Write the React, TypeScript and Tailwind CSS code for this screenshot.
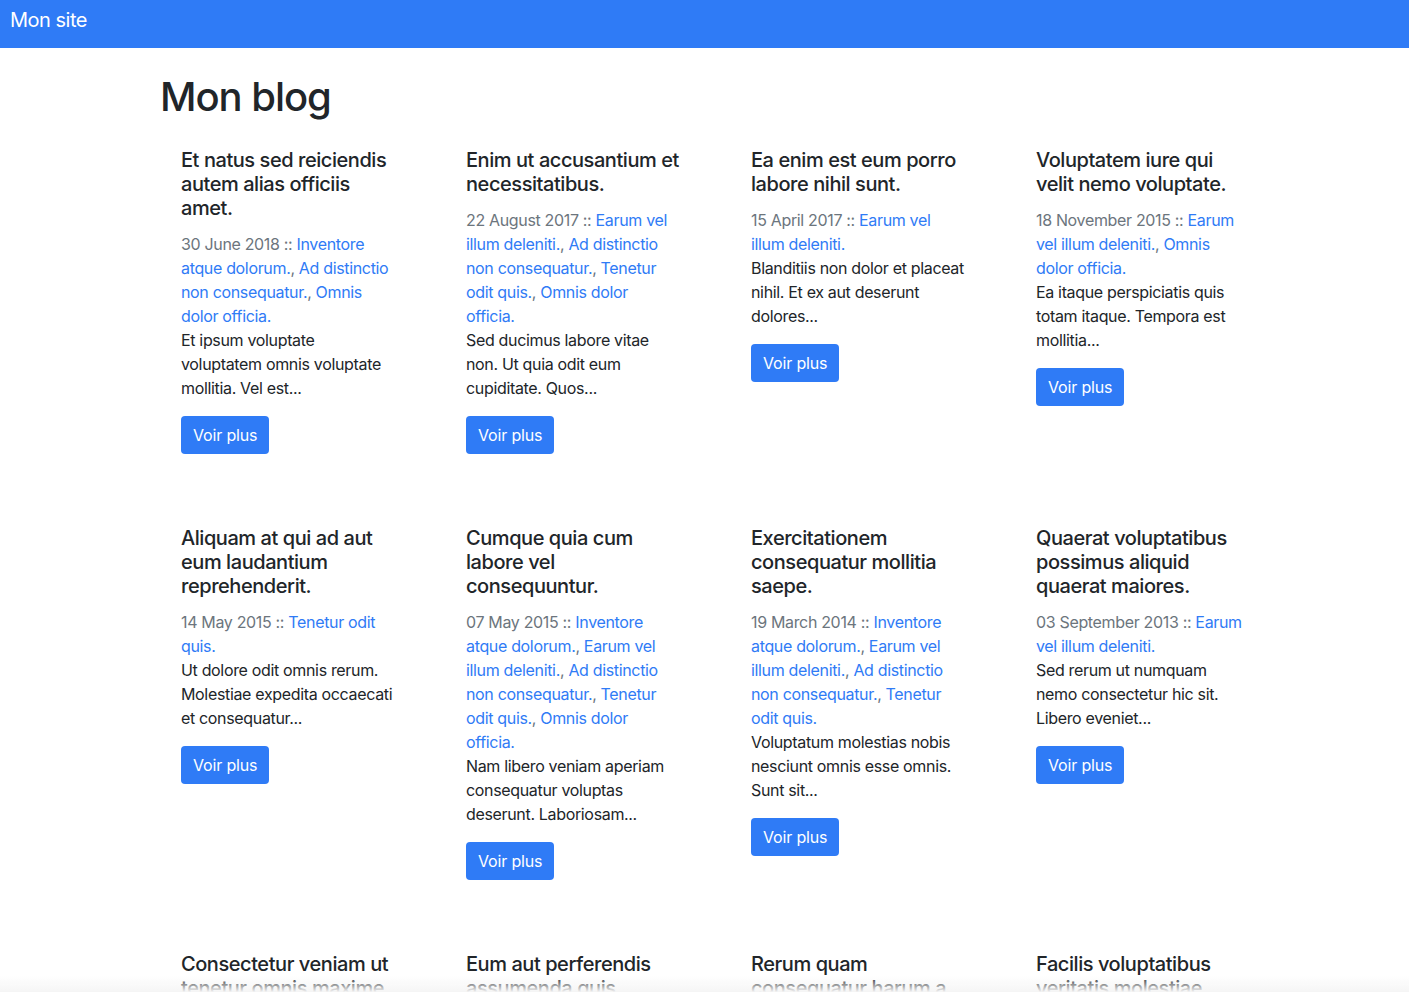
import React from "react";

type Post = { title: string; date: string; cats: string[]; excerpt: string };

const posts: Post[] = [
  {
    title: "Et natus sed reiciendis autem alias officiis amet.",
    date: "30 June 2018",
    cats: ["Inventore atque dolorum.", "Ad distinctio non consequatur.", "Omnis dolor officia."],
    excerpt: "Et ipsum voluptate voluptatem omnis voluptate mollitia. Vel est...",
  },
  {
    title: "Enim ut accusantium et necessitatibus.",
    date: "22 August 2017",
    cats: ["Earum vel illum deleniti.", "Ad distinctio non consequatur.", "Tenetur odit quis.", "Omnis dolor officia."],
    excerpt: "Sed ducimus labore vitae non. Ut quia odit eum cupiditate. Quos...",
  },
  {
    title: "Ea enim est eum porro labore nihil sunt.",
    date: "15 April 2017",
    cats: ["Earum vel illum deleniti."],
    excerpt: "Blanditiis non dolor et placeat nihil. Et ex aut deserunt dolores...",
  },
  {
    title: "Voluptatem iure qui velit nemo voluptate.",
    date: "18 November 2015",
    cats: ["Earum vel illum deleniti.", "Omnis dolor officia."],
    excerpt: "Ea itaque perspiciatis quis totam itaque. Tempora est mollitia...",
  },
  {
    title: "Aliquam at qui ad aut eum laudantium reprehenderit.",
    date: "14 May 2015",
    cats: ["Tenetur odit quis."],
    excerpt: "Ut dolore odit omnis rerum. Molestiae expedita occaecati et consequatur...",
  },
  {
    title: "Cumque quia cum labore vel consequuntur.",
    date: "07 May 2015",
    cats: ["Inventore atque dolorum.", "Earum vel illum deleniti.", "Ad distinctio non consequatur.", "Tenetur odit quis.", "Omnis dolor officia."],
    excerpt: "Nam libero veniam aperiam consequatur voluptas deserunt. Laboriosam...",
  },
  {
    title: "Exercitationem consequatur mollitia saepe.",
    date: "19 March 2014",
    cats: ["Inventore atque dolorum.", "Earum vel illum deleniti.", "Ad distinctio non consequatur.", "Tenetur odit quis."],
    excerpt: "Voluptatum molestias nobis nesciunt omnis esse omnis. Sunt sit...",
  },
  {
    title: "Quaerat voluptatibus possimus aliquid quaerat maiores.",
    date: "03 September 2013",
    cats: ["Earum vel illum deleniti."],
    excerpt: "Sed rerum ut numquam nemo consectetur hic sit. Libero eveniet...",
  },
  {
    title: "Consectetur veniam ut tenetur omnis maxime.",
    date: "02 June 2013",
    cats: ["Omnis dolor officia."],
    excerpt: "Quia voluptas et aut qui. Sit ut aut aperiam...",
  },
  {
    title: "Eum aut perferendis assumenda quis.",
    date: "11 January 2013",
    cats: ["Tenetur odit quis."],
    excerpt: "Dolorem et quo nesciunt. Et ut ut magni...",
  },
  {
    title: "Rerum quam consequatur harum a ipsa.",
    date: "27 October 2012",
    cats: ["Inventore atque dolorum."],
    excerpt: "Aut omnis velit sit enim. Qui et est...",
  },
  {
    title: "Facilis voluptatibus veritatis molestiae.",
    date: "05 August 2012",
    cats: ["Earum vel illum deleniti."],
    excerpt: "Non eum dolores rerum. Aut quia nam...",
  },
];

function Card({ p }: { p: Post }) {
  return (
    <div className="pl-[21px] pr-[51px] py-5">
      <h5 className="text-[20px] leading-6 font-medium tracking-[-0.022em] text-[#212529] mb-3">{p.title}</h5>
      <div className="text-[16px] leading-6 text-[#6c757d]">
        {p.date} ::{" "}
        {p.cats.map((c, i) => (
          <React.Fragment key={i}>
            <a className="text-[#2f7bf6]" href="#">
              {c}
            </a>
            {i < p.cats.length - 1 ? ", " : ""}
          </React.Fragment>
        ))}
      </div>
      <p className="text-[16px] leading-6 text-[#212529] mb-4">{p.excerpt}</p>
      <button className="h-[38px] px-3 rounded bg-[#2f7bf6] text-white text-[16px] leading-6 tracking-[-0.01em]">
        Voir plus
      </button>
    </div>
  );
}

export default function App() {
  return (
    <div
      className="min-h-screen bg-white tracking-[-0.021em]"
      style={{ fontFamily: "Inter, 'Helvetica Neue', Arial, sans-serif" }}
    >
      <nav className="h-12 bg-[#2f7bf6] flex items-start px-[10px] pt-[7px]">
        <span className="text-white text-[20px] leading-[26px] tracking-[-0.025em]">Mon site</span>
      </nav>
      <main className="pl-[160px]">
        <h1 className="text-[40px] leading-[48px] font-medium tracking-[-0.026em] text-[#212529] mt-[25px] mb-[7px]">
          Mon blog
        </h1>
        <div className="grid grid-cols-[repeat(4,285px)] gap-y-8">
          {posts.map((p, i) => (
            <Card key={i} p={p} />
          ))}
        </div>
      </main>
      <div className="fixed left-0 right-0 bottom-0 h-4 bg-gradient-to-b from-transparent to-[#f5f5f5] pointer-events-none" />
    </div>
  );
}
